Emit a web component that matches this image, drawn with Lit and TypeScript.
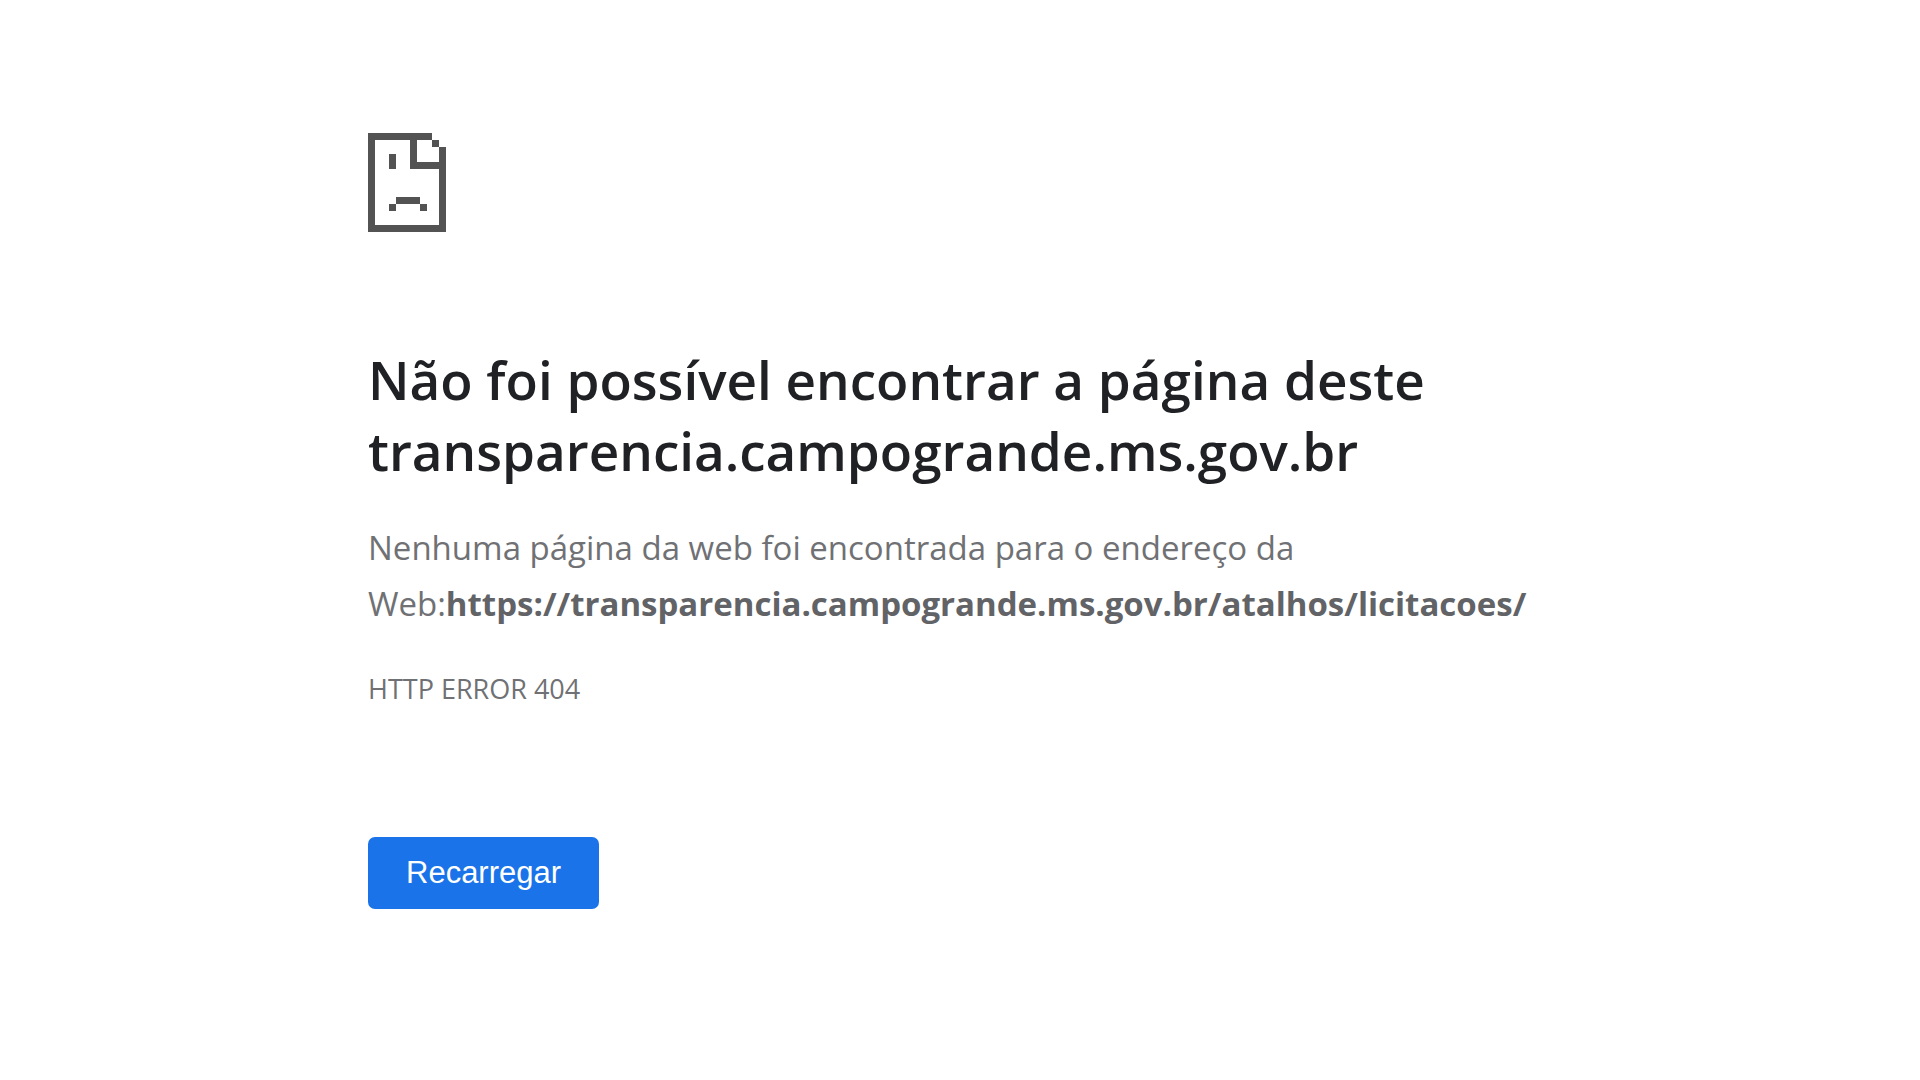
import { LitElement, html, css } from "lit";
import { customElement } from "lit/decorators.js";

@customElement("app-root")
export class AppRoot extends LitElement {
  static styles = css`
    :host {
      display: block;
      min-height: 100vh;
      background: #fff;
      color: #707174;
      font-family: "Segoe UI", "Open Sans", "Noto Sans", sans-serif;
    }
    .page {
      padding: 133px 368px 0;
    }
    .icon {
      display: block;
      width: 78px;
      height: 99px;
    }
    .title {
      margin: 112px 0 0;
      color: #202124;
      font-size: 53px;
      font-weight: 600;
      line-height: 71px;
    }
    .summary {
      margin: 34px 0 0;
      font-size: 33px;
      line-height: 56px;
    }
    .address {
      color: #626366;
    }
    .code {
      margin: 39px 0 0;
      font-size: 27px;
      line-height: 36px;
    }
    .reload {
      display: block;
      margin-top: 130px;
      padding: 0 38px;
      border: 0;
      border-radius: 7px;
      background: #1a73e8;
      color: #fff;
      font: 500 31px/72px "Liberation Sans", Arial, sans-serif;
    }
  `;

  render() {
    return html`
      <main class="page">
        <svg class="icon" viewBox="0 0 78 99" fill="#535353" shape-rendering="crispEdges" aria-hidden="true">
          <path fill-rule="evenodd" d="M0 0H64V7H71V14H78V99H0ZM7 7V92H71V36H42V7ZM49 7V29H71V14H64V7Z" />
          <path d="M21 21H28V36H21ZM28 64H52V71H28ZM21 71H28V78H21ZM52 71H59V78H52Z" />
        </svg>
        <h1 class="title">Não foi possível encontrar a página deste<br />transparencia.campogrande.ms.gov.br</h1>
        <p class="summary">Nenhuma página da web foi encontrada para o endereço da<br />Web:<strong class="address">https://transparencia.campogrande.ms.gov.br/atalhos/licitacoes/</strong></p>
        <p class="code">HTTP ERROR 404</p>
        <button class="reload" type="button">Recarregar</button>
      </main>
    `;
  }
}
